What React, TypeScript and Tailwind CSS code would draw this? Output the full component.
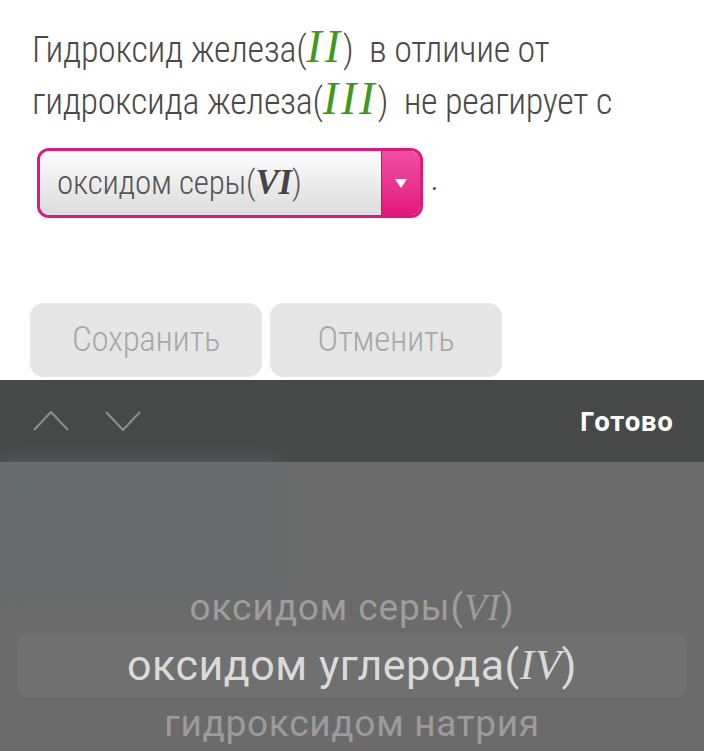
import React from "react";

const cond = { fontFamily: '"Roboto Condensed", "Liberation Sans Narrow", Roboto, sans-serif' };

const M = ({ children, className }: { children: React.ReactNode; className?: string }) => (
  <span className={`italic font-['Liberation_Serif',serif] ${className ?? ""}`}>{children}</span>
);

export default function App() {
  return (
    <div className="w-[704px] h-[751px] overflow-hidden bg-white flex flex-col font-['Roboto',sans-serif]">
      {/* Question */}
      <div className="pl-[32px] pt-[24px] h-[380px] flex flex-col">
        <p className="text-[36px] leading-[52px] text-[#4a4a4a] font-light tracking-[-0.3px]" style={cond}>
          Гидроксид железа(<M className="text-[#3f9a1c] text-[46px] leading-none tracking-[3px]">II</M>)&nbsp; в отличие от
          <br />
          гидроксида железа(<M className="text-[#3f9a1c] text-[46px] leading-none tracking-[3px]">III</M>)&nbsp; не реагирует с
        </p>
        <div className="flex items-end mt-[20px] ml-[5px]">
          <div className="w-[386px] h-[70px] rounded-[12px] border-[3px] border-[#e0177f] flex overflow-hidden">
            <div className="flex-1 bg-gradient-to-b from-[#fdfdfd] to-[#dcdcdc] flex items-center pl-[17px] text-[33px] text-[#555] font-light tracking-[-0.2px]" style={cond}>
              оксидом серы(<M className="text-[#444] font-bold text-[35px]">VI</M>)
            </div>
            <div className="w-[39px] bg-gradient-to-b from-[#f04ea2] to-[#e2137d] flex items-center justify-center border-l border-[#c8106c]">
              <svg width="14" height="11" viewBox="0 0 14 11">
                <path d="M1 1 H13 L7 10 Z" fill="#fff" />
              </svg>
            </div>
          </div>
          <span className="ml-[8px] mb-[24px] text-[#444] text-[26px] leading-none">.</span>
        </div>
        <div className="flex gap-[8px] mt-[85px] ml-[-2px]">
          <button className="w-[232px] h-[74px] rounded-[14px] bg-[#e6e6e6] text-[#a9a9a9] text-[35px] font-light tracking-[-0.3px]" style={cond}>
            Сохранить
          </button>
          <button className="w-[232px] h-[74px] rounded-[14px] bg-[#e6e6e6] text-[#a9a9a9] text-[35px] font-light tracking-[-0.3px]" style={cond}>
            Отменить
          </button>
        </div>
      </div>

      {/* Toolbar */}
      <div className="h-[82px] bg-[#474848] flex items-center justify-between pl-[33px] pr-[31px]">
        <div className="flex gap-[36px]">
          <svg width="36" height="22" viewBox="0 0 36 22">
            <path d="M1 20 L18 2 L35 20" fill="none" stroke="#8b8d8d" strokeWidth="2.2" />
          </svg>
          <svg width="36" height="22" viewBox="0 0 36 22">
            <path d="M1 2 L18 20 L35 2" fill="none" stroke="#8b8d8d" strokeWidth="2.2" />
          </svg>
        </div>
        <span className="text-white font-bold text-[26px] font-['Open_Sans',sans-serif]">Готово</span>
      </div>

      {/* Picker */}
      <div className="flex-1 relative bg-[#6b6b6b] flex flex-col items-center pt-[123px]">
        <div className="absolute left-0 top-0 w-[280px] h-[130px] bg-[#646a6c] opacity-70 blur-[10px]" />
        <div className="relative h-[46px] flex items-center text-[37px] text-[#9d9d9d] tracking-[0.9px]">
          оксидом серы(<M>VI</M>)
        </div>
        <div className="relative mt-[2px] w-[670px] h-[64px] rounded-[10px] bg-[#707070] flex items-center justify-center text-[43px] text-[#dadada] tracking-[0.5px]">
          оксидом углерода(<M>IV</M>)
        </div>
        <div className="relative h-[54px] flex items-center text-[37px] text-[#9b9b9b] tracking-[0.7px]">
          гидроксидом натрия
        </div>
      </div>
    </div>
  );
}
